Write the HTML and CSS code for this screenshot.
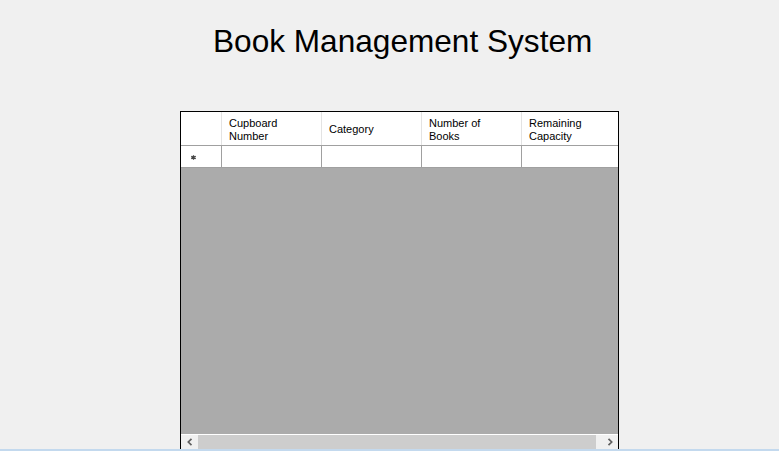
FILE: index.html
```html
<!DOCTYPE html>
<html>
<head>
<meta charset="utf-8">
<title>Book Management System</title>
<link rel="stylesheet" href="styles.css">
</head>
<body>
<div class="window">
  <h1 class="title">Book Management System</h1>
  <div class="grid">
    <div class="row head">
      <div class="cell rh"></div>
      <div class="cell">Cupboard<br>Number</div>
      <div class="cell">Category</div>
      <div class="cell">Number of<br>Books</div>
      <div class="cell">Remaining<br>Capacity</div>
    </div>
    <div class="row data">
      <div class="cell rh">
        <svg class="star" width="5" height="5" viewBox="0 0 5 5"><path d="M2.5 0.2V4.8M0.3 1.3L4.7 3.7M0.3 3.7L4.7 1.3" stroke="#444" stroke-width="1.3"/></svg>
      </div>
      <div class="cell"></div>
      <div class="cell"></div>
      <div class="cell"></div>
      <div class="cell"></div>
    </div>
    <div class="empty"></div>
    <div class="hscroll">
      <div class="btn">
        <svg width="8" height="8" viewBox="0 0 8 8"><path d="M5.5 0.8L2.3 4L5.5 7.2" fill="none" stroke="#606060" stroke-width="1.7"/></svg>
      </div>
      <div class="thumb"></div>
      <div class="btn right">
        <span class="arrowbox">
          <svg width="8" height="8" viewBox="0 0 8 8"><path d="M2.5 0.8L5.7 4L2.5 7.2" fill="none" stroke="#606060" stroke-width="1.7"/></svg>
        </span>
      </div>
    </div>
  </div>
</div>
<div class="bottombar"></div>
</body>
</html>
```

FILE: styles.css
```css
html, body {
  margin: 0;
  padding: 0;
}
body {
  width: 779px;
  height: 451px;
  overflow: hidden;
  background: #f0f0f0;
  font-family: "Liberation Sans", Arial, sans-serif;
  display: flex;
  flex-direction: column;
}
.window {
  height: 449px;
  display: flex;
  flex-direction: column;
}
.title {
  margin: 0 0 0 213px;
  padding-top: 23px;
  font-size: 31.6px;
  font-weight: normal;
  line-height: 36px;
  color: #000;
  white-space: nowrap;
}
.grid {
  margin: 52px 0 0 180px;
  width: 437px;
  flex: 1;
  border: 1px solid #000;
  border-bottom: none;
  display: flex;
  flex-direction: column;
  overflow: hidden;
}
.row {
  display: flex;
  flex: none;
  background: #fff;
}
.head {
  height: 33px;
  border-bottom: 1px solid #a0a0a0;
}
.data {
  height: 21px;
  border-bottom: 1px solid #a0a0a0;
}
.cell {
  flex: none;
  width: 92px;
  border-right: 1px solid #a0a0a0;
  font-size: 11px;
  line-height: 13px;
  color: #000;
  padding-left: 7px;
  box-sizing: content-box;
  display: flex;
  align-items: center;
}
.head .cell {
  border-right-color: #e3e3e3;
  padding-top: 2px;
  height: 31px;
}
.cell.rh {
  width: 33px;
}
.star {
  margin-left: 3px;
  margin-top: 2px;
}
.empty {
  flex: 1;
  background: #ababab;
  border-bottom: 1px solid #fff;
}
.hscroll {
  height: 14px;
  flex: none;
  display: flex;
  background: #cdcdcd;
}
.btn {
  width: 17px;
  flex: none;
  background: #f0f0f0;
  display: flex;
  align-items: center;
  justify-content: center;
}
.btn.right {
  width: 22px;
  justify-content: flex-end;
}
.arrowbox {
  width: 17px;
  display: flex;
  justify-content: center;
}
.thumb {
  flex: 1;
  background: #cdcdcd;
}
.bottombar {
  height: 2px;
  background: #c3d9ee;
  flex: none;
}
```
